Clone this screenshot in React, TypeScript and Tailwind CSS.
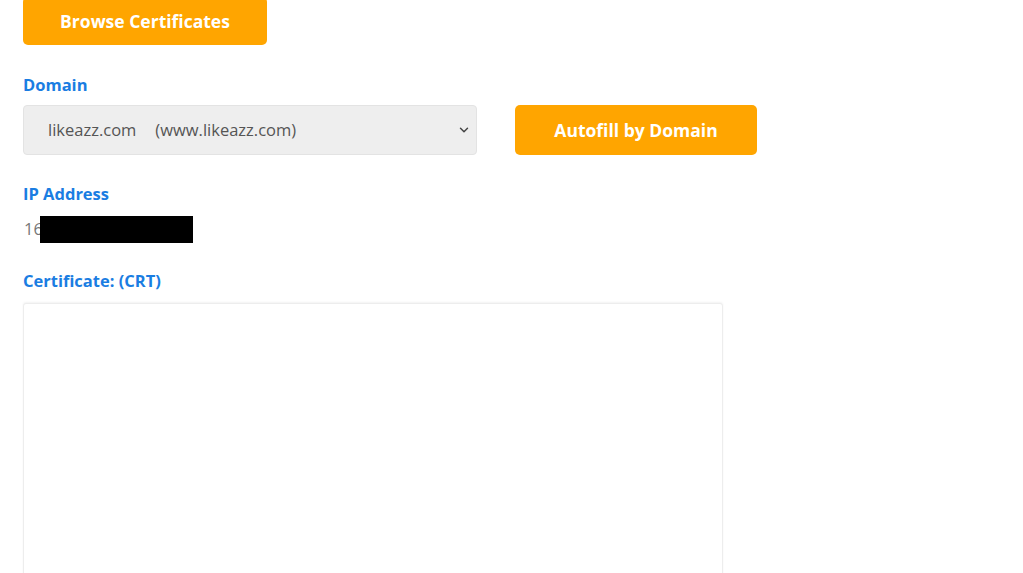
import { ChevronDown } from "lucide-react";

const font = { fontFamily: '"Open Sans", "Noto Sans", sans-serif' };

function Label({ children }: { children: React.ReactNode }) {
  return <p className="text-[16.5px] font-bold leading-[20px] text-[#1a7de2]">{children}</p>;
}

export default function App() {
  return (
    <div className="h-[573px] overflow-hidden bg-white" style={font}>
      <div className="flex flex-col pl-[23px]">
        <button className="-mt-[3px] flex h-[48px] w-[244px] items-center justify-center rounded-[5px] bg-[#ffa500] text-[17.5px] font-bold text-white">
          Browse Certificates
        </button>

        <div className="mt-[30px]">
          <Label>Domain</Label>
        </div>
        <div className="mt-[10px] flex items-center gap-[38px]">
          <div className="relative flex h-[50px] w-[454px] items-center rounded-[4px] border border-[#e3e3e3] bg-[#eeeeee] pl-[24px] text-[16.5px] text-[#555555]">
            <span>likeazz.com</span>
            <span className="ml-[19px]">(www.likeazz.com)</span>
            <ChevronDown className="absolute right-[5px] top-[17px] h-[14px] w-[14px] text-[#444]" strokeWidth={2.5} />
          </div>
          <button className="flex h-[50px] w-[242px] items-center justify-center rounded-[5px] bg-[#ffa500] text-[17.5px] font-bold text-white">
            Autofill by Domain
          </button>
        </div>

        <div className="mt-[29px]">
          <Label>IP Address</Label>
        </div>
        <div className="mt-[12px] flex h-[27px] items-center text-[16.5px] text-[#777777]">
          <span className="w-[17px] pl-[1px]">16</span>
          <span className="h-[27px] w-[153px] bg-black" />
        </div>

        <div className="mt-[28px]">
          <Label>Certificate: (CRT)</Label>
        </div>
        <textarea className="mt-[12px] h-[300px] w-[700px] shrink-0 resize-none rounded-[3px] border border-[#ededed] bg-white shadow-[0_-1px_2px_rgba(0,0,0,0.05)] outline-none" />
      </div>
    </div>
  );
}
